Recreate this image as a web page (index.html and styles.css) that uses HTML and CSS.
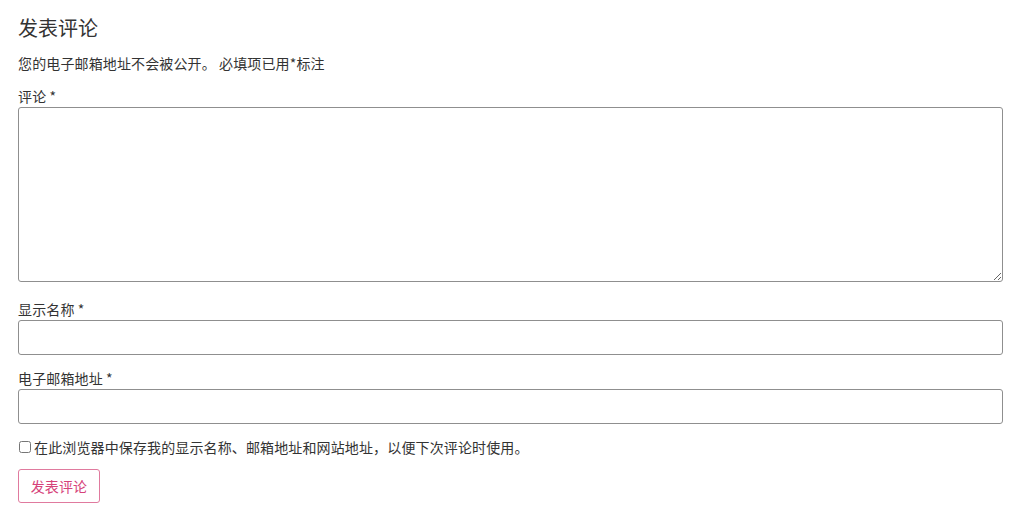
FILE: index.html
```html
<!DOCTYPE html>
<html lang="zh-CN">
<head>
<meta charset="utf-8">
<title>发表评论</title>
<link rel="stylesheet" href="styles.css">
</head>
<body>
<div class="respond">
  <h3 class="reply-title">发表评论</h3>
  <form class="comment-form">
    <p class="notes">您的电子邮箱地址不会被公开。 必填项已用*标注</p>
    <div class="field field-comment">
      <label class="label" for="comment">评论 *</label>
      <textarea id="comment" class="textarea"></textarea>
    </div>
    <div class="field field-author">
      <label class="label" for="author">显示名称 *</label>
      <input id="author" class="input" type="text">
    </div>
    <div class="field field-email">
      <label class="label" for="email">电子邮箱地址 *</label>
      <input id="email" class="input" type="email">
    </div>
    <div class="cookies">
      <input id="cookies" class="checkbox" type="checkbox">
      <label for="cookies">在此浏览器中保存我的显示名称、邮箱地址和网站地址，以便下次评论时使用。</label>
    </div>
    <div class="submit-row">
      <button class="submit" type="button">发表评论</button>
    </div>
  </form>
</div>
</body>
</html>
```

FILE: styles.css
```css
html, body {
  margin: 0;
  padding: 0;
  background: #ffffff;
}
body {
  font-family: "Noto Sans CJK SC", "Noto Sans", "Liberation Sans", sans-serif;
  font-size: 14px;
  color: #333333;
  letter-spacing: 0.13px;
}
.respond {
  padding: 14px 21px 0 18px;
}
.reply-title {
  margin: 0;
  font-size: 20px;
  line-height: 28px;
  font-weight: 400;
  color: #333333;
  letter-spacing: 0;
}
.comment-form {
  display: flex;
  flex-direction: column;
}
.notes {
  margin: 11px 0 0 0;
  line-height: 20px;
}
.field {
  display: flex;
  flex-direction: column;
}
.field-comment { margin-top: 13px; }
.field-author { margin-top: 17px; }
.field-email { margin-top: 13px; }
.label {
  display: block;
  line-height: 20px;
  height: 21px;
}
.textarea,
.input {
  box-sizing: border-box;
  width: 985px;
  border: 1px solid #8f8f8f;
  border-radius: 3px;
  background: #ffffff;
  font-family: inherit;
  font-size: 14px;
  margin: 0;
}
.textarea {
  height: 175px;
  resize: vertical;
  padding: 4px;
}
.input {
  height: 35px;
  padding: 0 6px;
}
.cookies {
  display: flex;
  align-items: center;
  margin-top: 13px;
  line-height: 20px;
}
.checkbox {
  width: 12px;
  height: 12px;
  margin: 0 3px 0 1px;
}
.submit-row {
  margin-top: 12px;
}
.submit {
  box-sizing: border-box;
  height: 34px;
  width: 82px;
  padding: 0;
  border: 1px solid #e07a9e;
  border-radius: 3px;
  background: #ffffff;
  color: #d6427a;
  font-family: inherit;
  font-size: 14px;
  letter-spacing: 0.13px;
}
```
